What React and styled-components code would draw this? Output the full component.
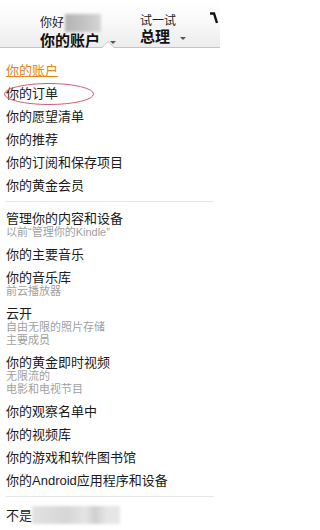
import React from "react"
import styled, { createGlobalStyle } from "styled-components"

const GlobalStyle = createGlobalStyle`
  body {
    margin: 0;
    background: #fff;
    font-family: "Liberation Sans", "Noto Sans CJK SC", sans-serif;
    color: #222;
  }
`

const Page = styled.div`
  width: 220px;
  height: 530px;
  overflow: hidden;
  position: relative;
`

const Header = styled.div`
  height: 48px;
  box-sizing: border-box;
  padding: 14px 0 0 40px;
  display: flex;
  background: linear-gradient(#fff 0%, #fafafa 40%, #ececec 100%);
  border-bottom: 1px solid #c4c4c4;
  position: relative;
`

const Nav = styled.div`
  width: ${props => props.width}px;
  position: relative;
`

const Hello = styled.div`
  font-size: 12px;
  line-height: 14px;
  color: #222;
  display: flex;
  align-items: center;
`

const Blur = styled.span`
  display: inline-block;
  width: ${props => props.width}px;
  height: ${props => props.height}px;
  margin-left: ${props => props.offset || 0}px;
  background: ${props => props.bg};
  filter: blur(1.5px);
`

const Title = styled.div`
  font-size: 15px;
  line-height: 17px;
  font-weight: bold;
  color: #111;
  display: flex;
  align-items: center;
`

const Caret = styled.span`
  width: 0;
  height: 0;
  margin-left: ${props => props.gap}px;
  margin-top: 3px;
  border-left: 3px solid transparent;
  border-right: 3px solid transparent;
  border-top: 3px solid #555;
`

const Notch = styled.span`
  position: absolute;
  left: 61px;
  bottom: -1px;
  width: 0;
  height: 0;
  border-left: 7px solid transparent;
  border-right: 7px solid transparent;
  border-bottom: 7px solid #c4c4c4;
  &::after {
    content: "";
    position: absolute;
    left: -6px;
    top: 1px;
    border-left: 6px solid transparent;
    border-right: 6px solid transparent;
    border-bottom: 6px solid #fff;
  }
`

const Cart = styled.svg`
  position: absolute;
  right: 0;
  top: 12px;
`

const Menu = styled.div`
  padding: 11px 6px 0 6px;
  position: relative;
`

const Item = styled.div`
  padding: 4px 0;
`

const ItemTitle = styled.div`
  font-size: 13px;
  line-height: 15px;
  color: ${props => (props.active ? "#e0861c" : "#1a1a1a")};
  text-decoration: ${props => (props.active ? "underline" : "none")};
  white-space: nowrap;
  display: flex;
  align-items: center;
`

const Sub = styled.div`
  font-size: 11px;
  line-height: 13px;
  color: #a0a0a0;
  white-space: nowrap;
`

const Divider = styled.div`
  height: 1px;
  background: #e6e6e6;
  margin: 4px 0 5px;
`

const Mark = styled.svg`
  position: absolute;
  left: 3px;
  top: 34px;
`

const groups = [
  [
    { title: "你的账户", active: true },
    { title: "你的订单" },
    { title: "你的愿望清单" },
    { title: "你的推荐" },
    { title: "你的订阅和保存项目" },
    { title: "你的黄金会员" },
  ],
  [
    { title: "管理你的内容和设备", sub: ["以前“管理你的Kindle”"] },
    { title: "你的主要音乐" },
    { title: "你的音乐库", sub: ["前云播放器"] },
    { title: "云开", sub: ["自由无限的照片存储", "主要成员"] },
    { title: "你的黄金即时视频", sub: ["无限流的", "电影和电视节目"] },
    { title: "你的观察名单中" },
    { title: "你的视频库" },
    { title: "你的游戏和软件图书馆" },
    { title: "你的Android应用程序和设备" },
  ],
]

export default function App() {
  return (
    <Page>
      <GlobalStyle />
      <Header>
        <Nav width={100}>
          <Hello>
            你好
            <Blur width={36} height={18} offset={1} bg="linear-gradient(90deg, #b4b4b4, #c2c2c2 50%, #d6d6d6)" />
          </Hello>
          <Title>
            你的账户
            <Caret gap={10} />
          </Title>
          <Notch />
        </Nav>
        <Nav width={60}>
          <Hello>试一试</Hello>
          <Title>
            总理
            <Caret gap={10} />
          </Title>
        </Nav>
        <Cart width="12" height="12" viewBox="0 0 12 12">
          <path d="M2 1.5 H6 L9 11" fill="none" stroke="#111" strokeWidth="2.4" />
        </Cart>
      </Header>
      <Menu>
        {groups.map((group, gi) => (
          <React.Fragment key={gi}>
            {group.map(item => (
              <Item key={item.title}>
                <ItemTitle active={item.active}>{item.title}</ItemTitle>
                {item.sub && item.sub.map(s => <Sub key={s}>{s}</Sub>)}
              </Item>
            ))}
            <Divider />
          </React.Fragment>
        ))}
        <Item>
          <ItemTitle>
            不是
            <Blur width={88} height={18} offset={0} bg="linear-gradient(90deg, #e2e2e2 0%, #d6d6d6 40%, #e4e4e4 60%, #cfcfcf 72%, #e6e6e6 85%)" />
          </ItemTitle>
        </Item>
        <Mark width="92" height="24" viewBox="0 0 92 24">
          <ellipse cx="46" cy="12" rx="44.5" ry="10.5" fill="none" stroke="#d25c78" strokeWidth="1" />
        </Mark>
      </Menu>
    </Page>
  )
}
